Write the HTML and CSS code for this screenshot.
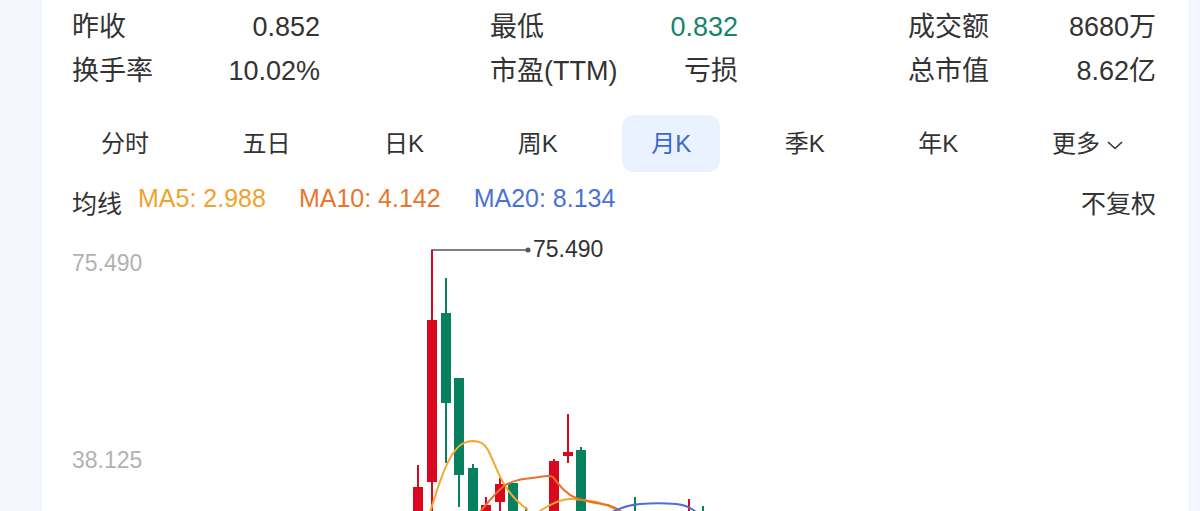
FILE: index.html
```html
<!DOCTYPE html>
<html lang="zh-CN">
<head>
<meta charset="utf-8">
<title>K线</title>
<link rel="stylesheet" href="styles.css">
</head>
<body>
<div class="card">
  <div class="stats">
    <div class="stat"><span class="label">昨收</span><span class="value">0.852</span></div>
    <div class="stat"><span class="label">最低</span><span class="value down">0.832</span></div>
    <div class="stat"><span class="label">成交额</span><span class="value">8680万</span></div>
    <div class="stat"><span class="label">换手率</span><span class="value">10.02%</span></div>
    <div class="stat"><span class="label">市盈(TTM)</span><span class="value">亏损</span></div>
    <div class="stat"><span class="label">总市值</span><span class="value">8.62亿</span></div>
  </div>
  <div class="tabs">
    <div class="tab">分时</div>
    <div class="tab">五日</div>
    <div class="tab">日K</div>
    <div class="tab">周K</div>
    <div class="tab active">月K</div>
    <div class="tab">季K</div>
    <div class="tab">年K</div>
    <div class="tab more">更多<svg class="chev" width="18" height="10" viewBox="0 0 18 10"><path d="M2 2 L9 8.5 L16 2" fill="none" stroke="#333" stroke-width="1.6"/></svg></div>
  </div>
  <div class="ma-row">
    <div class="ma-list">
      <span class="ma-title">均线</span>
      <span class="ma ma5">MA5: 2.988</span>
      <span class="ma ma10">MA10: 4.142</span>
      <span class="ma ma20">MA20: 8.134</span>
    </div>
    <span class="fq">不复权</span>
  </div>
  <svg class="chart" width="1146" height="291" viewBox="42 220 1146 291">
    <text class="axis" x="72" y="271">75.490</text>
    <text class="axis" x="72" y="468">38.125</text>
    <!-- annotation -->
    <polyline points="432,251 432,250 528,250" fill="none" stroke="#555" stroke-width="1.5"/>
    <circle cx="528" cy="250" r="2.5" fill="#555"/>
    <text class="note" x="533" y="257">75.490</text>
    <!-- candles -->
    <g class="up">
      <rect x="417" y="465" width="2" height="60"/>
      <rect x="413" y="487" width="10" height="40"/>
      <rect x="431" y="250" width="2" height="270"/>
      <rect x="427" y="320" width="10" height="162"/>
      <rect x="485" y="497" width="2" height="30"/>
      <rect x="481" y="505" width="10" height="20"/>
      <rect x="499" y="478" width="2" height="45"/>
      <rect x="495" y="484" width="10" height="18"/>
      <rect x="553" y="459" width="2" height="60"/>
      <rect x="549" y="461" width="10" height="60"/>
      <rect x="567" y="414" width="2" height="49"/>
      <rect x="563" y="452" width="10" height="4"/>
      <rect x="688" y="499" width="2" height="20"/>
    </g>
    <g class="dn">
      <rect x="445" y="278" width="2" height="185"/>
      <rect x="441" y="313" width="10" height="90"/>
      <rect x="458" y="378" width="2" height="129"/>
      <rect x="454" y="378" width="10" height="97"/>
      <rect x="472" y="464" width="2" height="50"/>
      <rect x="468" y="468" width="10" height="50"/>
      <rect x="508" y="483" width="10" height="40"/>
      <rect x="525" y="507" width="2" height="20"/>
      <rect x="580" y="447" width="2" height="60"/>
      <rect x="576" y="450" width="10" height="70"/>
      <rect x="634" y="497" width="2" height="20"/>
      <rect x="702" y="506" width="2" height="20"/>
    </g>
    <!-- MA lines -->
    <path class="l5" d="M429 515 C436 495 442 470 452 455 C458 446 462 442 472 441 C480 441 484 443 488 450 C494 462 498 474 504 484 C510 494 518 503 528 510 M540 511 C552 503 562 498 572 499 C582 500 590 500 600 503 C608 505 614 508 620 512"/>
    <path class="l10" d="M478 514 C486 505 494 494 504 486 C514 480 522 479 532 478 C542 477 548 474 553 477 C560 486 566 494 576 498 C586 502 598 503 608 505 C614 507 618 509 622 512"/>
    <path class="l20" d="M612 512 C620 508 628 505 640 504 C652 503 664 503 676 504 C686 505 692 508 697 513"/>
  </svg>
</div>
</body>
</html>
```

FILE: styles.css
```css
html, body {
  margin: 0;
  padding: 0;
}
body {
  background: #f3f6fd;
  font-family: "Liberation Sans", "Noto Sans CJK SC", sans-serif;
  color: #333;
  height: 511px;
  overflow: hidden;
}
.card {
  margin-left: 42px;
  width: 1146px;
  height: 511px;
  background: #fff;
  box-sizing: border-box;
  padding: 5px 32px 0 30px;
  overflow: hidden;
}
.stats {
  display: grid;
  grid-template-columns: 248px 248px 248px;
  column-gap: 170px;
  font-size: 27px;
  line-height: 44px;
}
.stat {
  display: flex;
  justify-content: space-between;
  white-space: nowrap;
}
.value.down {
  color: #13866a;
}
.tabs {
  display: flex;
  justify-content: space-between;
  margin-top: 22px;
  font-size: 24px;
}
.tab {
  height: 57px;
  line-height: 57px;
  padding: 0 29px;
  border-radius: 12px;
  display: flex;
  align-items: center;
  white-space: nowrap;
}
.tab.active {
  background: #e9f2fe;
  color: #3a68d2;
}
.tab.more {
  padding-right: 32px;
}
.chev {
  margin-left: 6px;
  margin-top: 2px;
}
.ma-row {
  display: flex;
  justify-content: space-between;
  align-items: center;
  margin-top: 12px;
  height: 36px;
  font-size: 25px;
}
.ma-list {
  display: flex;
  gap: 16px;
}
.ma-list .ma {
  margin-right: 17px;
}
.ma5 { color: #f0a32a; }
.ma10 { color: #e8762c; }
.ma20 { color: #4a72d4; }
.chart {
  display: block;
  margin-left: -30px;
}
.axis {
  font-family: "Liberation Sans", sans-serif;
  font-size: 23px;
  fill: #b2b2b2;
}
.note {
  font-family: "Liberation Sans", sans-serif;
  font-size: 23px;
  fill: #333;
}
.up rect { fill: #d9081f; }
.dn rect { fill: #07805f; }
.l5, .l10, .l20 {
  fill: none;
  stroke-width: 2;
}
.l5 { stroke: #f3a92e; }
.l10 { stroke: #e9712a; }
.l20 { stroke: #4b6fd6; }
```
